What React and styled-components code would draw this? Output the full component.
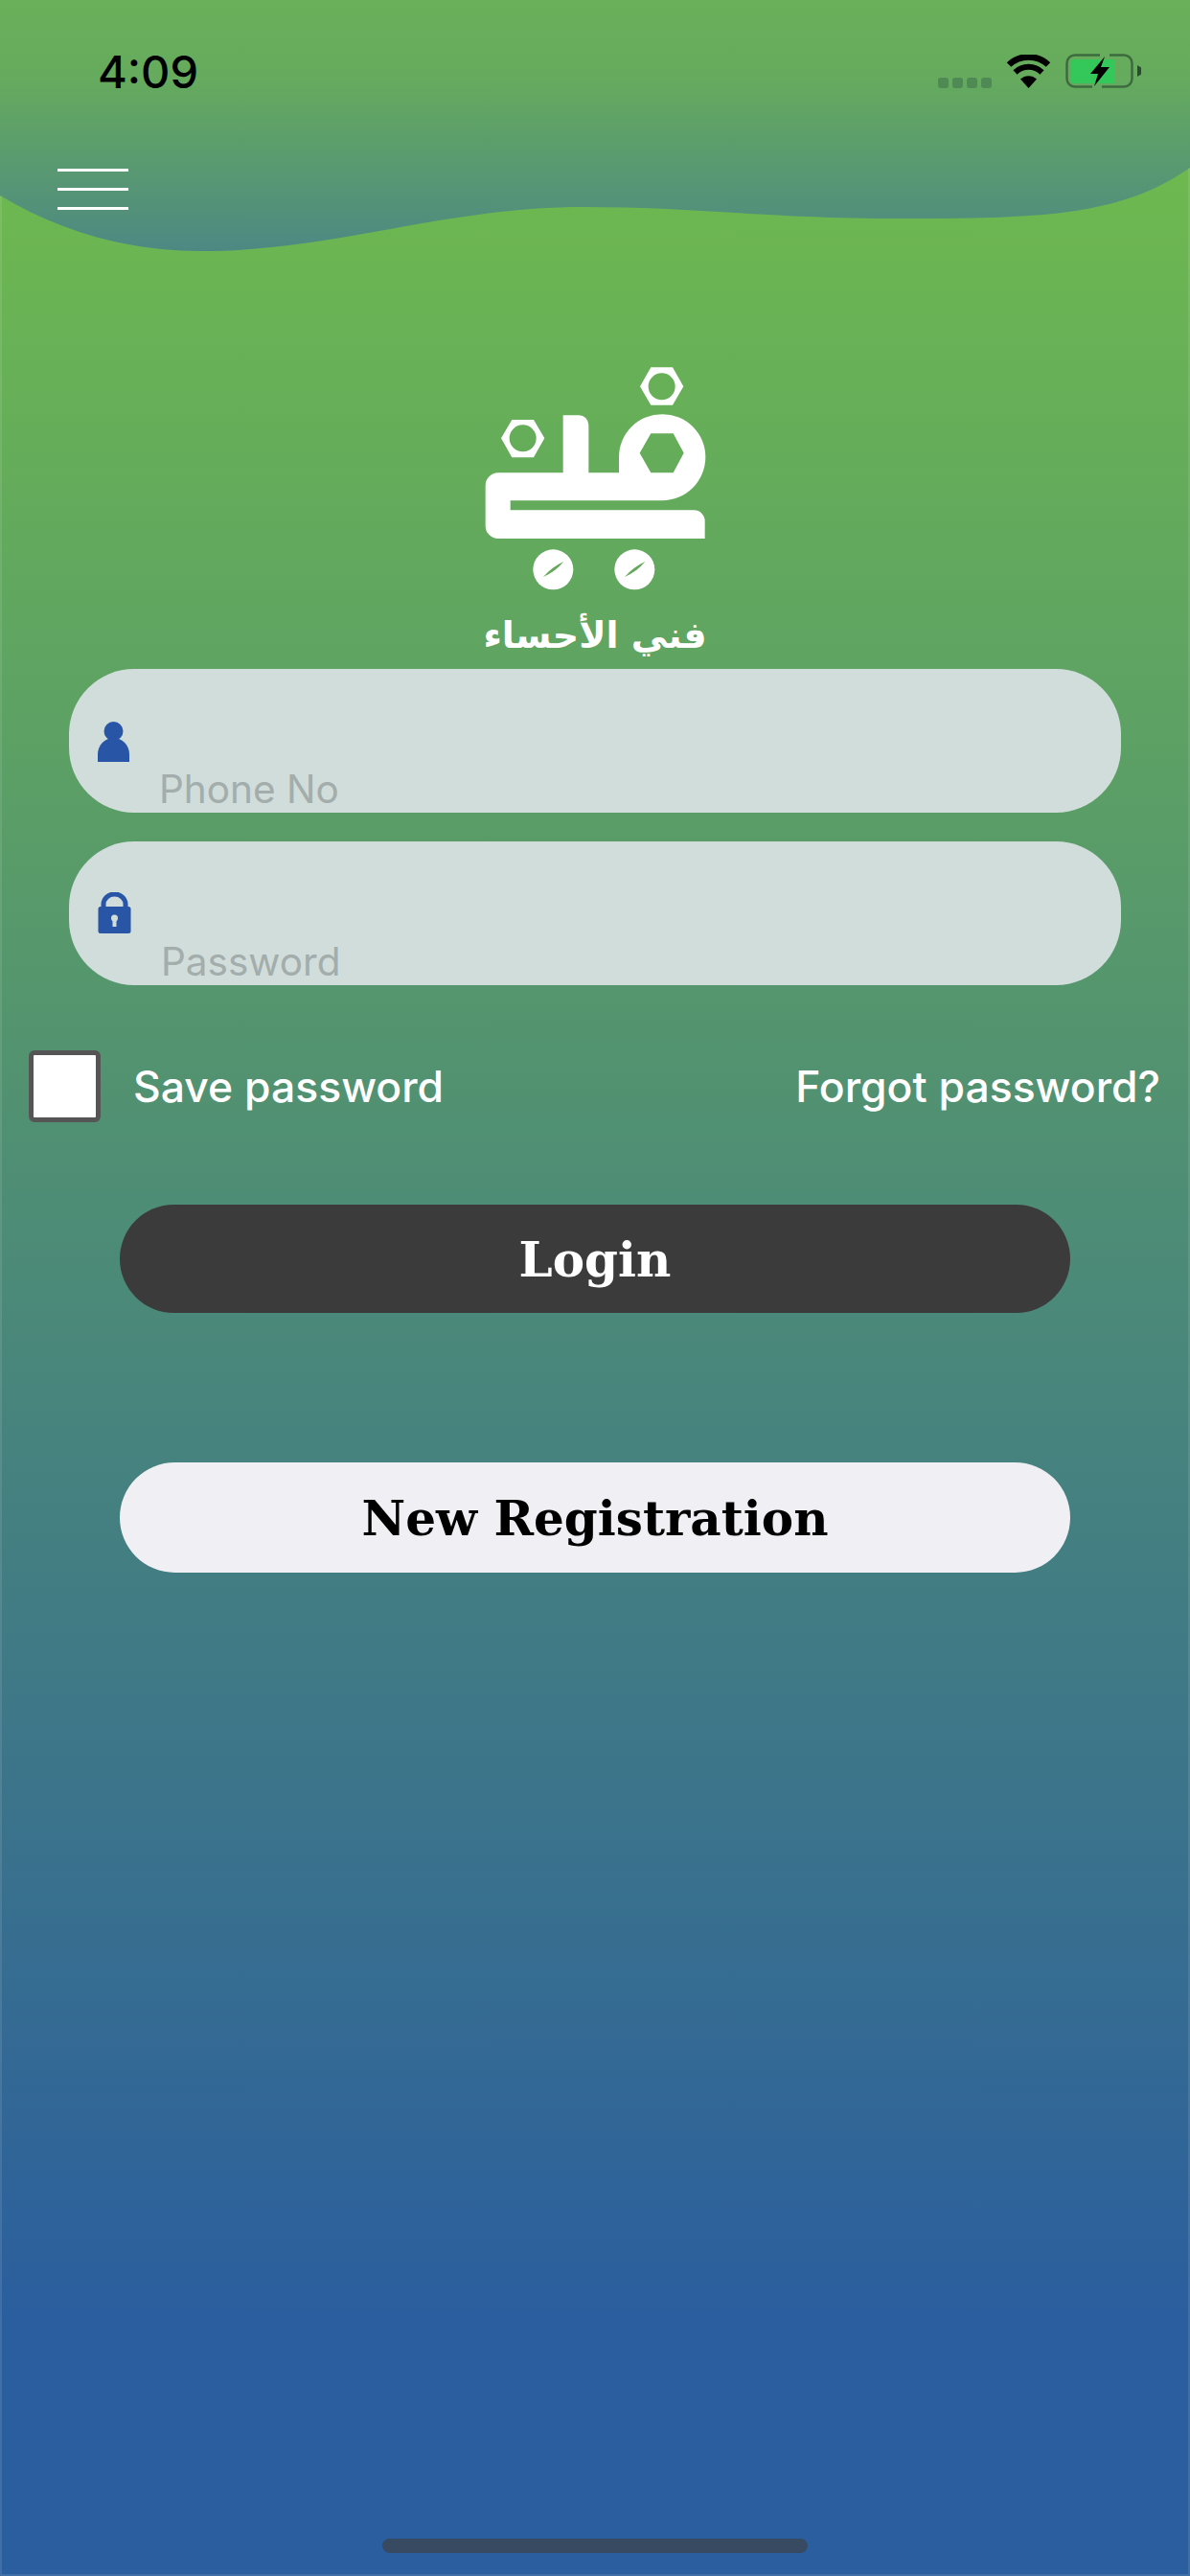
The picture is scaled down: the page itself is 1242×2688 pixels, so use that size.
import React from 'react';
import styled, { createGlobalStyle } from 'styled-components';

const GlobalStyle = createGlobalStyle`
  html, body {
    margin: 0;
    padding: 0;
    background: #2b5e9e;
  }
`;

const Page = styled.div`
  position: relative;
  display: flex;
  flex-direction: column;
  width: 1242px;
  height: 2688px;
  overflow: hidden;
  background: linear-gradient(180deg, #6eb850 0%, #6eb850 7%, #2b5e9e 90%, #2b5e9e 100%);
  box-shadow: inset 0 0 0 2px rgba(255, 255, 255, 0.1);
  font-family: Inter, 'Liberation Sans', sans-serif;
`;

const Header = styled.header`
  position: relative;
  height: 265px;
`;

const Wave = styled.svg`
  position: absolute;
  top: 0;
  left: 0;
`;

const StatusBar = styled.div`
  position: relative;
  box-sizing: border-box;
  display: flex;
  justify-content: space-between;
  align-items: flex-start;
  height: 95px;
  padding: 50px 51px 0 102px;
`;

const Time = styled.span`
  font-size: 47px;
  line-height: 50px;
  font-weight: 500;
  color: #000;
`;

const StatusIcons = styled.div`
  display: flex;
  align-items: flex-end;
  margin-top: 6px;
  height: 36px;
`;

const SignalDots = styled.div`
  display: flex;
  gap: 4px;
  margin-right: 15px;
`;

const SignalDot = styled.span`
  width: 11px;
  height: 11px;
  border-radius: 3px;
  background: #4f8a55;
`;

const MenuButton = styled.div`
  position: relative;
  display: flex;
  flex-direction: column;
  gap: 17px;
  width: 74px;
  margin: 81px 0 0 60px;
`;

const MenuLine = styled.span`
  height: 3px;
  background: #fff;
`;

const Logo = styled.div`
  display: flex;
  flex-direction: column;
  align-items: center;
  height: 338px;
  margin-top: 95px;
`;

const LogoTitle = styled.div`
  font-family: 'DejaVu Sans', sans-serif;
  font-size: 38px;
  line-height: 50px;
  font-weight: 700;
  color: #fff;
  direction: rtl;
  margin-top: -2px;
`;

const Fields = styled.div`
  display: flex;
  flex-direction: column;
  gap: 30px;
  margin: 0 72px;
`;

const Field = styled.div`
  display: flex;
  align-items: flex-start;
  height: 150px;
  padding-left: 30px;
  border-radius: 68px;
  background: #d1dddb;
`;

const FieldIcon = styled.div`
  width: 64px;
  margin-top: ${(p) => p.$top}px;
  line-height: 0;
`;

const Placeholder = styled.span`
  margin-top: ${(p) => p.$top}px;
  margin-left: ${(p) => p.$left || 0}px;
  font-size: 40.5px;
  line-height: 48px;
  color: #a3adab;
`;

const Options = styled.div`
  display: flex;
  align-items: center;
  justify-content: space-between;
  margin-top: 68px;
  padding: 0 31px 0 30px;
`;

const SaveGroup = styled.label`
  display: flex;
  align-items: center;
  gap: 34px;
`;

const CheckBox = styled.span`
  box-sizing: border-box;
  width: 75px;
  height: 75px;
  border: 5px solid #555;
  border-radius: 6px;
  background: #fff;
`;

const OptionText = styled.span`
  font-size: 44.5px;
  line-height: 52px;
  font-weight: 500;
  color: #fff;
`;

const Buttons = styled.div`
  display: flex;
  flex-direction: column;
  gap: 156px;
  margin: 86px 125px 0;
`;

const Button = styled.button`
  height: ${(p) => (p.$light ? 115 : 113)}px;
  padding: 2px 0 0;
  border: 0;
  border-radius: 58px;
  background: ${(p) => (p.$light ? '#f0eff4' : '#3b3b3b')};
  color: ${(p) => (p.$light ? '#000' : '#fff')};
  font-family: 'DejaVu Serif', serif;
  font-size: 50px;
  font-weight: 700;
  line-height: 1;
`;

const HomeBar = styled.div`
  width: 444px;
  height: 15px;
  margin: auto auto 24px;
  border-radius: 8px;
  background: #374a62;
`;

const WifiIcon = () => (
  <svg width="47" height="35" viewBox="0 0 47 35" style={{ marginRight: 15 }}>
    <path d="M23.5 35 L15 25.5 A12.5 12.5 0 0 1 32 25.5 Z" fill="#000" />
    <path d="M9.5 18.5 A20 20 0 0 1 37.5 18.5" fill="none" stroke="#000" strokeWidth="6" />
    <path d="M3 10.5 A30 30 0 0 1 44 10.5" fill="none" stroke="#000" strokeWidth="6.5" />
  </svg>
);

const BatteryIcon = () => (
  <svg width="79" height="36" viewBox="0 0 79 36">
    <path
      d="M36 1.5 H10 A8.5 8.5 0 0 0 1.5 10 V26 A8.5 8.5 0 0 0 10 34.5 H28 M46 1.5 H61 A8.5 8.5 0 0 1 69.5 10 V26 A8.5 8.5 0 0 1 61 34.5 H38"
      fill="none"
      stroke="#3d6b3f"
      strokeWidth="2.5"
    />
    <rect x="6" y="6" width="46" height="25" rx="2" fill="#34c759" />
    <path d="M75 12 L79 14.5 V21.5 L75 24 Z" fill="#2c4a2e" />
    <path d="M41 3 L26 21 H34 L30 34 L46 14 H37 Z" fill="#000" />
  </svg>
);

const PersonIcon = () => (
  <svg width="33" height="42" viewBox="0 0 33 42">
    <circle cx="16.5" cy="10" r="10" fill="#2955a6" />
    <path d="M0 42 V34 C0 24 8 17 16.5 17 C25 17 33 24 33 34 V42 Z" fill="#2955a6" />
  </svg>
);

const LockIcon = () => (
  <svg width="35" height="43" viewBox="0 0 35 43">
    <path d="M6 20 V12.5 A11.5 10.5 0 0 1 29 12.5 V20" fill="none" stroke="#2955a6" strokeWidth="5" />
    <rect x="0.5" y="15" width="34" height="28" rx="2.5" fill="#2955a6" />
    <circle cx="17.5" cy="27" r="3.5" fill="#d1dddb" />
    <rect x="15.5" y="27" width="4" height="9" fill="#d1dddb" />
  </svg>
);

const LogoMark = () => (
  <svg width="320" height="280" viewBox="0 0 960 840">
    <path
      fillRule="evenodd"
      fill="#fff"
      d="M655 70 L723 70 L757 130 L723 188 L655 188 L621 130 Z M689 88 A42 42 0 1 0 689 172 A42 42 0 1 0 689 88 Z"
    />
    <path
      fillRule="evenodd"
      fill="#fff"
      d="M220 234 L288 234 L322 292 L288 352 L220 352 L186 292 Z M254 250 A42 42 0 1 0 254 334 A42 42 0 1 0 254 250 Z"
    />
    <path
      fillRule="evenodd"
      fill="#fff"
      d="M137 440 A40 40 0 0 1 177 400 H380 V220 H430 A30 30 0 0 1 460 250 V400 H555 V350 A135 133 0 0 1 826 350 A136 137 0 0 1 690 487 H215 V517 H790 A34 34 0 0 1 824 551 V606 H177 A40 40 0 0 1 137 566 Z
         M620 338 L655 277 H725 L758 338 L725 400 H655 Z"
    />
    <circle cx="349" cy="703" r="63" fill="#fff" />
    <circle cx="604" cy="703" r="63" fill="#fff" />
    <path d="M318 726 Q345 695 382 678 Q358 708 318 726 Z" fill="#64a85b" />
    <path d="M573 726 Q600 695 637 678 Q613 708 573 726 Z" fill="#64a85b" />
  </svg>
);

const App = () => (
  <Page>
    <GlobalStyle />
    <Header>
      <Wave width="1242" height="265" viewBox="0 0 1242 265">
        <defs>
          <linearGradient id="waveFill" x1="0" y1="0" x2="0" y2="262" gradientUnits="userSpaceOnUse">
            <stop offset="0" stopColor="#6ab05a" />
            <stop offset="0.3" stopColor="#66ab5d" />
            <stop offset="1" stopColor="#4d8983" />
          </linearGradient>
        </defs>
        <path
          fill="url(#waveFill)"
          d="M0 204 C60 240 130 262 210 262 C350 262 460 216 610 216 C730 216 800 228 943 228 C1090 228 1170 225 1242 175 V0 H0 Z"
        />
      </Wave>
      <StatusBar>
        <Time>4:09</Time>
        <StatusIcons>
          <SignalDots>
            <SignalDot />
            <SignalDot />
            <SignalDot />
            <SignalDot />
          </SignalDots>
          <WifiIcon />
          <BatteryIcon />
        </StatusIcons>
      </StatusBar>
      <MenuButton>
        <MenuLine />
        <MenuLine />
        <MenuLine />
      </MenuButton>
    </Header>
    <Logo>
      <LogoMark />
      <LogoTitle>فني الأحساء</LogoTitle>
    </Logo>
    <Fields>
      <Field>
        <FieldIcon $top={55}><PersonIcon /></FieldIcon>
        <Placeholder $top={102}>Phone No</Placeholder>
      </Field>
      <Field>
        <FieldIcon $top={53}><LockIcon /></FieldIcon>
        <Placeholder $top={102} $left={2}>Password</Placeholder>
      </Field>
    </Fields>
    <Options>
      <SaveGroup>
        <CheckBox />
        <OptionText>Save password</OptionText>
      </SaveGroup>
      <OptionText>Forgot password?</OptionText>
    </Options>
    <Buttons>
      <Button>Login</Button>
      <Button $light>New Registration</Button>
    </Buttons>
    <HomeBar />
  </Page>
);

export default App;
